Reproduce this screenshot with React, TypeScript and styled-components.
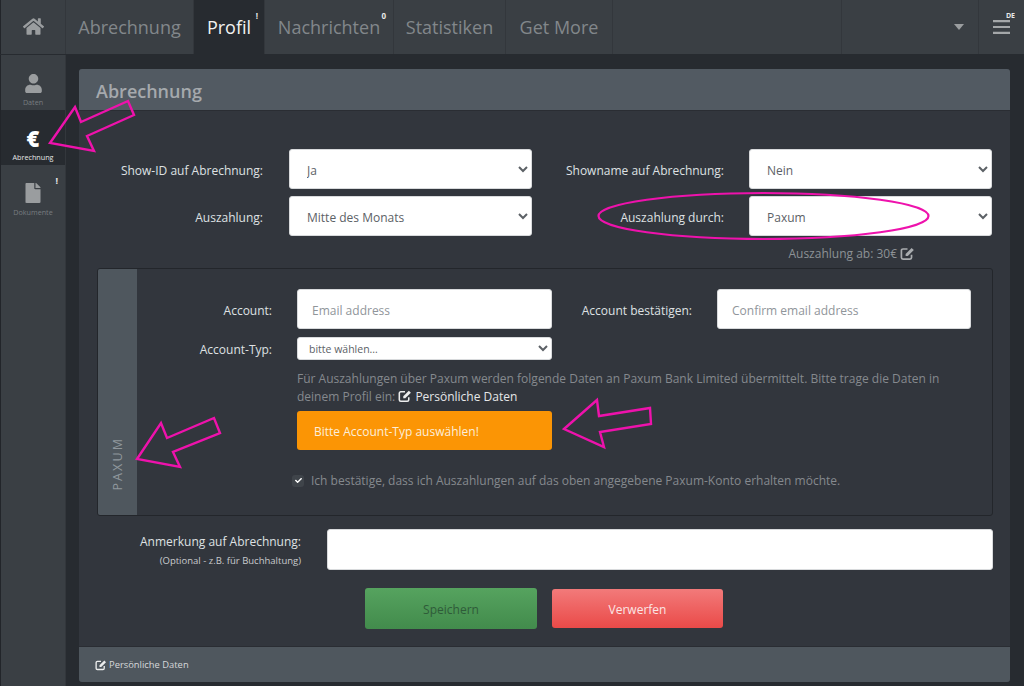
import React from "react";
import styled, { createGlobalStyle } from "styled-components";
import { FaCheck, FaFile, FaHome, FaUser } from "react-icons/fa";

const Global = createGlobalStyle`
  html, body { margin: 0; padding: 0; background: #272b30; }
  * { box-sizing: border-box; }
  body { font-family: "Open Sans", "Liberation Sans", sans-serif; font-size: 12px; color: #dfe1e3; }
`;

const Page = styled.div`
  position: relative;
  width: 1024px;
  height: 686px;
  overflow: hidden;
  display: grid;
  grid-template-columns: 66px 1fr;
  grid-template-rows: 55px 1fr;
  background: #272b30;
`;

const TopBar = styled.nav`
  grid-column: 1 / 3;
  display: flex;
  height: 54px;
  background: #3a3f44;
  border-left: 1px solid #22252a;
`;

const HomeCell = styled.div`
  width: 65px;
  display: flex;
  align-items: center;
  justify-content: center;
  color: #9a9d9f;
  font-size: 21px;
  border-right: 1px solid #33373c;
  padding-bottom: 1px;
`;

const Tab = styled.div<{ $w: number; $active?: boolean }>`
  position: relative;
  width: ${(p) => p.$w}px;
  display: flex;
  align-items: center;
  justify-content: center;
  font-size: 18px;
  color: ${(p) => (p.$active ? "#f2f2f2" : "#82878b")};
  background: ${(p) => (p.$active ? "#272b30" : "transparent")};
  border-right: 1px solid #33373c;
  padding-bottom: 1px;
`;

const TabBadge = styled.span<{ $right: number }>`
  position: absolute;
  top: 12px;
  right: ${(p) => p.$right}px;
  font-size: 8px;
  font-weight: 700;
  line-height: 1;
  color: #e8e8e8;
`;

const BarSpacer = styled.div<{ $w: number }>`
  width: ${(p) => p.$w}px;
  border-right: 1px solid #33373c;
`;

const CaretCell = styled.div`
  flex: 1;
  display: flex;
  align-items: center;
  justify-content: flex-end;
  padding-right: 14px;
  border-right: 1px solid #33373c;
`;

const Caret = styled.span`
  width: 0;
  height: 0;
  border-left: 5px solid transparent;
  border-right: 5px solid transparent;
  border-top: 6px solid #9a9d9f;
`;

const MenuCell = styled.div`
  position: relative;
  width: 45px;
  display: flex;
  align-items: center;
  justify-content: center;
  color: #a4a7a9;
  padding-right: 1px;
`;

const LangBadge = styled.span`
  position: absolute;
  top: 12px;
  right: 9px;
  font-size: 7px;
  font-weight: 700;
  line-height: 1;
  color: #e8e8e8;
`;

const SideBar = styled.aside`
  background: #3a3f44;
  border-left: 1px solid #22252a;
  border-right: 1px solid #33373c;
`;

const SideItem = styled.div<{ $active?: boolean; $top: number; $gap: number; $icon: number }>`
  position: relative;
  height: 55px;
  display: flex;
  flex-direction: column;
  align-items: center;
  padding-top: ${(p) => p.$top}px;
  gap: ${(p) => p.$gap}px;
  background: ${(p) => (p.$active ? "#272b30" : "transparent")};
  color: ${(p) => (p.$active ? "#ffffff" : "#9a9d9f")};
  font-size: ${(p) => p.$icon}px;
`;

const EuroGlyph = styled.span`
  height: 16px;
  line-height: 16px;
  font-weight: 800;
`;

const SideLabel = styled.span<{ $active?: boolean }>`
  font-size: 7.2px;
  line-height: 9px;
  color: ${(p) => (p.$active ? "#e6e6e6" : "#777c80")};
`;

const SideBadge = styled.span`
  position: absolute;
  top: 11px;
  right: 7px;
  font-size: 9px;
  font-weight: 700;
  line-height: 1;
  color: #e8e8e8;
`;

const Main = styled.main`
  padding: 14px 14px 4px 13px;
  min-height: 0;
`;

const Panel = styled.section`
  height: 613px;
  display: flex;
  flex-direction: column;
  background: #32363d;
  border-radius: 3px;
  overflow: hidden;
`;

const PanelHead = styled.h1`
  margin: 0;
  height: 42px;
  padding: 2px 17px 0;
  display: flex;
  align-items: center;
  background: #525a62;
  border-bottom: 1px solid #2a2d33;
  color: #a5a9ad;
  font-size: 18px;
  font-weight: 600;
`;

const PanelBody = styled.div`
  flex: 1;
  padding: 38px 0 0 1px;
`;

const TopForm = styled.div`
  display: grid;
  grid-template-columns: 209px 243px 217px 243px;
  row-gap: 7px;
`;

const FieldLabel = styled.label<{ $pad?: number }>`
  display: flex;
  align-items: center;
  justify-content: flex-end;
  padding: 2px ${(p) => p.$pad ?? 26}px 0 0;
  font-size: 12px;
  color: #dfe1e3;
  white-space: nowrap;
`;

const Select = styled.select`
  width: 100%;
  height: 40px;
  padding: 2px 13px 0;
  background-color: #fff;
  border: 1px solid #d8dadc;
  border-radius: 3px;
  font: 12px "Open Sans", sans-serif;
  color: #5c6166;
`;

const SmallSelect = styled(Select)`
  height: 23px;
  padding: 0 7px;
  font-size: 10.5px;
`;

const TextInput = styled.input`
  display: block;
  width: 100%;
  height: 40px;
  padding: 2px 14px 0;
  background: #fff;
  border: 1px solid #d8dadc;
  border-radius: 3px;
  font: 12px "Open Sans", sans-serif;
  &::placeholder { color: #90959a; opacity: 1; }
`;

const MinLine = styled.div`
  height: 32px;
  padding: 3px 95px 0 0;
  display: flex;
  justify-content: flex-end;
  align-items: center;
  gap: 3px;
  font-size: 12px;
  color: #8d9296;
`;

const PaxumBox = styled.div`
  width: 896px;
  height: 248px;
  margin-left: 17px;
  display: flex;
  border: 1px solid #23262b;
  border-radius: 3px;
  overflow: hidden;
`;

const Strip = styled.div`
  width: 39px;
  flex: none;
  display: flex;
  justify-content: center;
  align-items: flex-end;
  padding-bottom: 25px;
  background: #4f575e;
`;

const StripText = styled.span`
  writing-mode: vertical-rl;
  transform: rotate(180deg);
  font-size: 12.5px;
  letter-spacing: 2.1px;
  color: #90979d;
`;

const PaxumContent = styled.div`
  flex: 1;
  padding-top: 20px;
`;

const AccountGrid = styled.div`
  display: grid;
  grid-template-columns: 160px 255px 165px 254px;
  row-gap: 8px;
`;

const HintColumn = styled.div`
  margin-left: 160px;
  width: 660px;
  padding-top: 10px;
`;

const Hint = styled.p`
  margin: 0;
  font-size: 12px;
  line-height: 18px;
  color: #85898e;
`;

const HintLink = styled.a`
  color: #e6e7e8;
  svg { vertical-align: -2px; margin-right: 3px; }
`;

const WarnBox = styled.div`
  width: 255px;
  height: 39px;
  margin-top: 5px;
  padding: 2px 0 0 17px;
  display: flex;
  align-items: center;
  background: #fb9505;
  border-radius: 3px;
  color: #fbeeda;
  font-size: 12px;
`;

const ConfirmRow = styled.div`
  margin: 22px 0 0 -5px;
  display: flex;
  align-items: center;
  gap: 7px;
  font-size: 12px;
  color: #85898e;
`;

const CheckMark = styled.span`
  width: 12px;
  height: 12px;
  display: flex;
  align-items: center;
  justify-content: center;
  background: #3f444a;
  border-radius: 3px;
  color: #fff;
  font-size: 7px;
`;

const NoteRow = styled.div`
  margin-top: 13px;
  display: grid;
  grid-template-columns: 247px 666px;
`;

const NoteLabel = styled.div`
  padding: 3px 26px 0 0;
  text-align: right;
  font-size: 12px;
  line-height: 19px;
  color: #dfe1e3;
`;

const NoteHint = styled.div`
  margin-top: 2px;
  font-size: 9.5px;
  line-height: 16px;
  color: #c9cbcd;
`;

const NoteInput = styled(TextInput)`
  height: 41px;
`;

const Actions = styled.div`
  margin: 18px 0 0 285px;
  display: flex;
  align-items: center;
  gap: 15px;
`;

const ActionButton = styled.button<{ $tone: "save" | "drop" }>`
  width: ${(p) => (p.$tone === "save" ? 172 : 171)}px;
  height: ${(p) => (p.$tone === "save" ? 41 : 39)}px;
  padding: 2px 0 0;
  border: 0;
  border-radius: 3px;
  font: 12px "Open Sans", sans-serif;
  color: ${(p) => (p.$tone === "save" ? "#2f5b39" : "#fbe6e6")};
  background: ${(p) =>
    p.$tone === "save"
      ? "linear-gradient(#56a35f, #428b4c)"
      : "linear-gradient(#f27a7a, #ea4a48)"};
`;

const PanelFoot = styled.footer`
  height: 36px;
  padding: 0 16px;
  display: flex;
  align-items: center;
  gap: 2px;
  background: #4f575e;
  border-top: 1px solid #2a2d33;
  color: #d6d8da;
  font-size: 9.4px;
`;

const Annotations = styled.svg`
  position: absolute;
  inset: 0;
  pointer-events: none;
`;

const Mark = styled.polygon`
  fill: none;
  stroke: #ee12ac;
  stroke-width: 2.4;
`;

const Ring = styled.ellipse`
  fill: none;
  stroke: #ee12ac;
  stroke-width: 2.2;
`;

// fa4 pencil-square-o: heavier than the fa5 regular edit icon
const EditIcon = ({ size, color }: { size: number; color: string }) => (
  <svg width={size} height={size} viewBox="0 0 16 16">
    <path d="M8 3.2H3.2A1.7 1.7 0 0 0 1.5 4.9v7.4A1.7 1.7 0 0 0 3.2 14h7.4a1.7 1.7 0 0 0 1.7-1.7V9.4" fill="none" stroke={color} strokeWidth="1.8" />
    <path d="M6 8.4 12.4 2l2.3 2.3L8.300 10.700H6z" fill={color} />
  </svg>
);

const BarsIcon = () => (
  <svg width="17" height="14" viewBox="0 0 17 14">
    <path d="M0 1.2h17M0 7h17M0 12.8h17" stroke="currentColor" strokeWidth="2.2" />
  </svg>
);

export default function App() {
  return (
    <Page>
      <Global />
      <TopBar>
        <HomeCell><FaHome /></HomeCell>
        <Tab $w={128}>Abrechnung</Tab>
        <Tab $w={71} $active>Profil<TabBadge $right={6}>!</TabBadge></Tab>
        <Tab $w={129}>Nachrichten<TabBadge $right={7}>0</TabBadge></Tab>
        <Tab $w={112}>Statistiken</Tab>
        <Tab $w={107}>Get More</Tab>
        <BarSpacer $w={229} />
        <CaretCell><Caret /></CaretCell>
        <MenuCell><BarsIcon /><LangBadge>DE</LangBadge></MenuCell>
      </TopBar>

      <SideBar>
        <SideItem $top={19} $gap={5} $icon={19}><FaUser /><SideLabel>Daten</SideLabel></SideItem>
        <SideItem $active $top={20} $gap={7} $icon={22}><EuroGlyph>€</EuroGlyph><SideLabel $active>Abrechnung</SideLabel></SideItem>
        <SideItem $top={18} $gap={5} $icon={20}><FaFile /><SideLabel>Dokumente</SideLabel><SideBadge>!</SideBadge></SideItem>
      </SideBar>

      <Main>
        <Panel>
          <PanelHead>Abrechnung</PanelHead>
          <PanelBody>
            <TopForm>
              <FieldLabel>Show-ID auf Abrechnung:</FieldLabel>
              <Select defaultValue="Ja"><option>Ja</option><option>Nein</option></Select>
              <FieldLabel $pad={25}>Showname auf Abrechnung:</FieldLabel>
              <Select defaultValue="Nein"><option>Ja</option><option>Nein</option></Select>
              <FieldLabel>Auszahlung:</FieldLabel>
              <Select defaultValue="Mitte des Monats"><option>Mitte des Monats</option></Select>
              <FieldLabel $pad={25}>Auszahlung durch:</FieldLabel>
              <Select defaultValue="Paxum"><option>Paxum</option></Select>
            </TopForm>
            <MinLine>Auszahlung ab: 30€ <EditIcon size={15} color="#a9acaf" /></MinLine>

            <PaxumBox>
              <Strip><StripText>PAXUM</StripText></Strip>
              <PaxumContent>
                <AccountGrid>
                  <FieldLabel $pad={25}>Account:</FieldLabel>
                  <TextInput placeholder="Email address" />
                  <FieldLabel $pad={25}>Account bestätigen:</FieldLabel>
                  <TextInput placeholder="Confirm email address" />
                  <FieldLabel $pad={25}>Account-Typ:</FieldLabel>
                  <SmallSelect defaultValue="bitte wählen..."><option>bitte wählen...</option></SmallSelect>
                </AccountGrid>
                <HintColumn>
                  <Hint>
                    Für Auszahlungen über Paxum werden folgende Daten an Paxum Bank Limited übermittelt. Bitte trage die Daten in
                    deinem Profil ein: <HintLink><EditIcon size={14} color="#eceded" />Persönliche Daten</HintLink>
                  </Hint>
                  <WarnBox>Bitte Account-Typ auswählen!</WarnBox>
                  <ConfirmRow>
                    <CheckMark><FaCheck /></CheckMark>
                    Ich bestätige, dass ich Auszahlungen auf das oben angegebene Paxum-Konto erhalten möchte.
                  </ConfirmRow>
                </HintColumn>
              </PaxumContent>
            </PaxumBox>

            <NoteRow>
              <NoteLabel>
                Anmerkung auf Abrechnung:
                <NoteHint>(Optional - z.B. für Buchhaltung)</NoteHint>
              </NoteLabel>
              <NoteInput />
            </NoteRow>

            <Actions>
              <ActionButton $tone="save">Speichern</ActionButton>
              <ActionButton $tone="drop">Verwerfen</ActionButton>
            </Actions>
          </PanelBody>
          <PanelFoot><EditIcon size={12} color="#eceded" />Persönliche Daten</PanelFoot>
        </Panel>
      </Main>

      <Annotations width="1024" height="686" viewBox="0 0 1024 686">
        <Mark points="50,143 75,107 81,122 128,101 134,115 87,136 94,151" />
        <Mark points="137,459 161,423 167,438 214,418 220,433 173,452 180,467" />
        <Mark points="564,429 597,400 599,416 650,408 651,424 600,432 604,447" />
        <Ring cx="763.5" cy="216" rx="165" ry="23" />
      </Annotations>
    </Page>
  );
}
